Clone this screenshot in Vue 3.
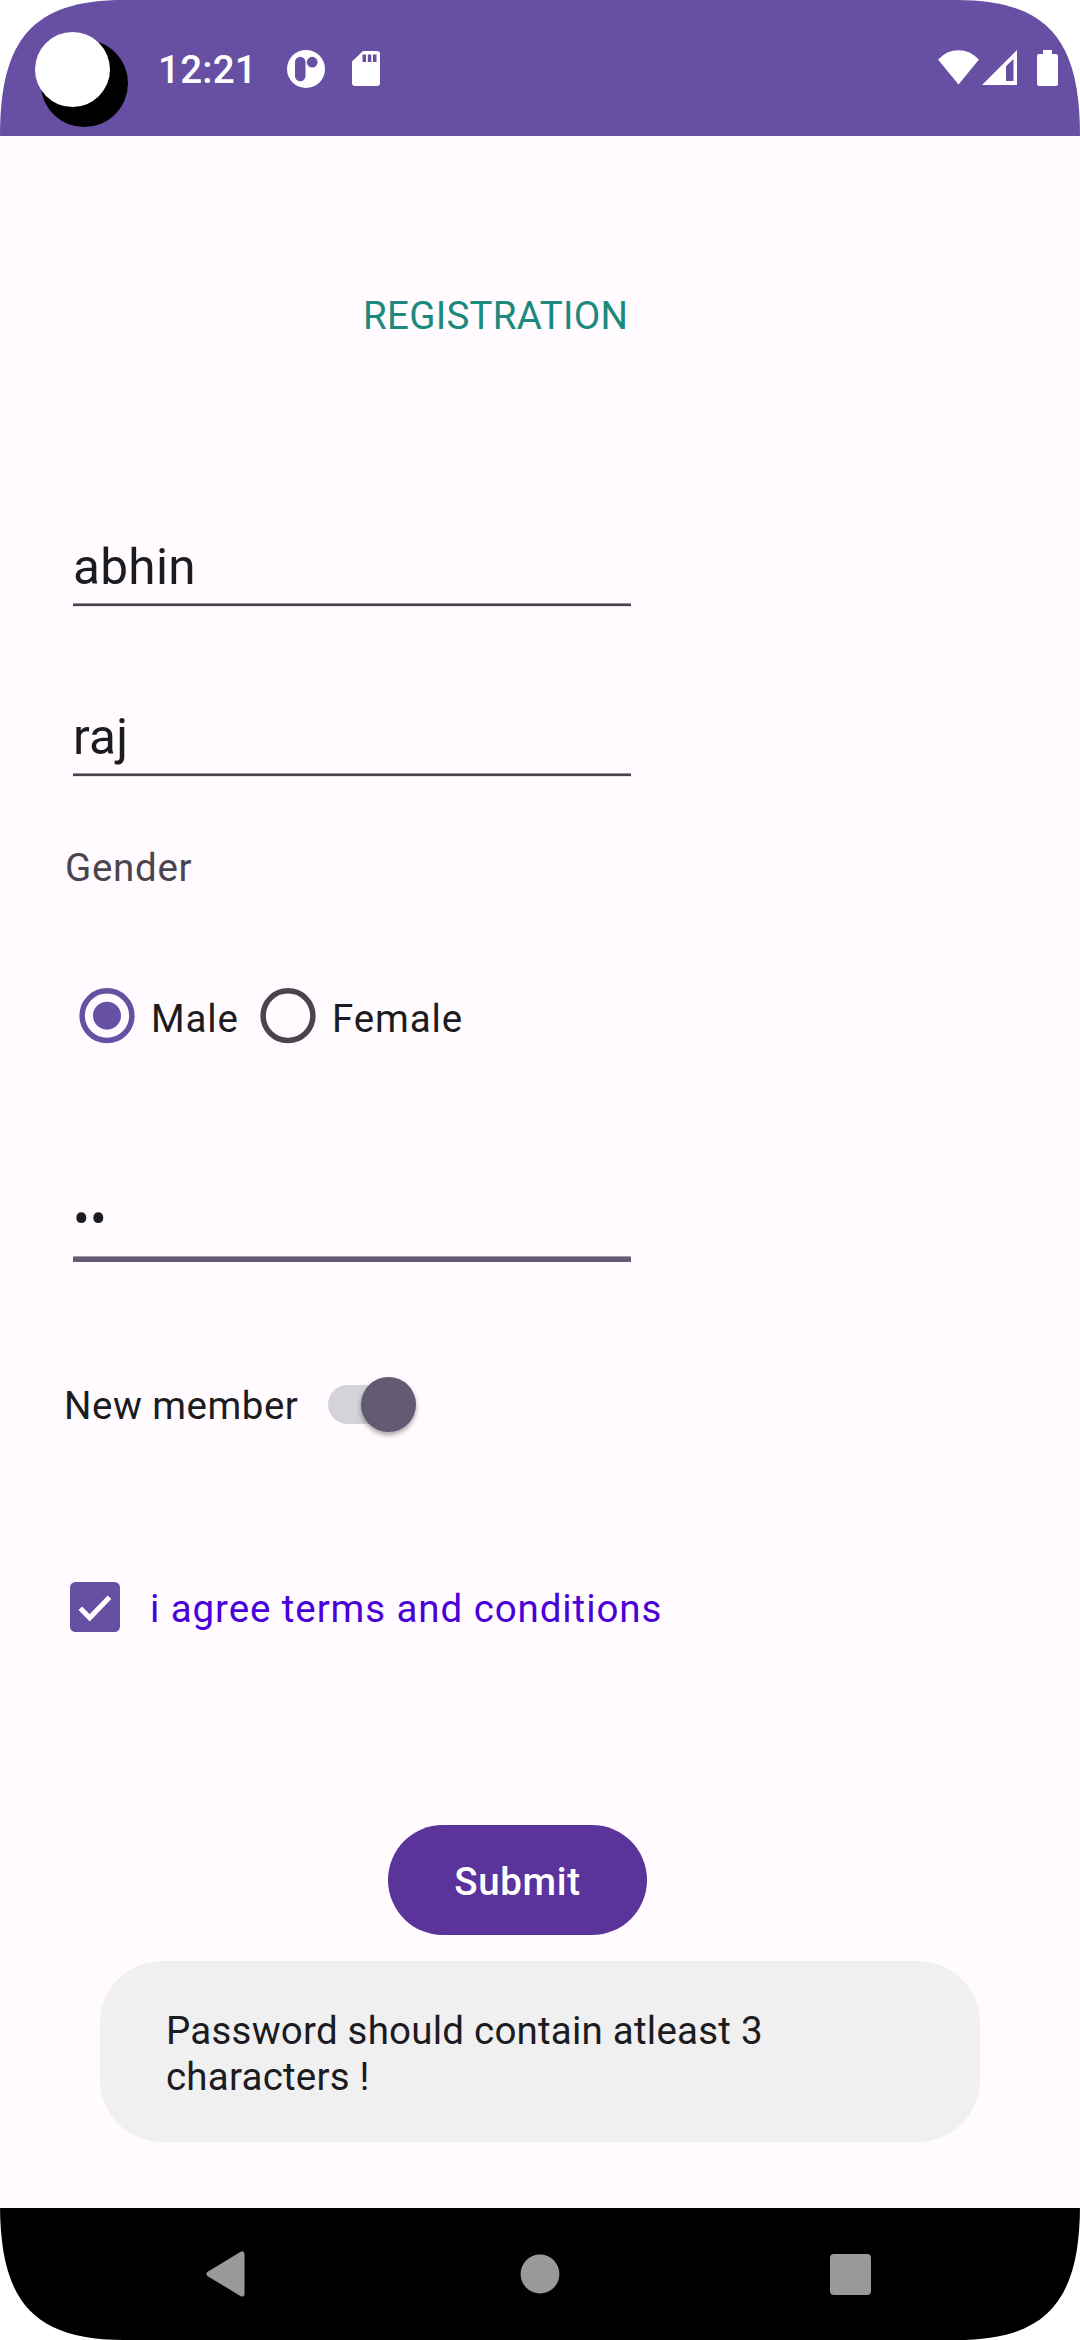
<script setup>
import { ref } from 'vue'

const firstName = ref('abhin')
const lastName = ref('raj')
const gender = ref('Male')
const options = ['Male', 'Female']
</script>

<template>
  <div class="screen">
    <header class="status">
      <svg class="camera" width="94" height="96" viewBox="35 32 94 96">
        <circle cx="84.3" cy="83.3" r="43.7" fill="#000" />
        <circle cx="72.5" cy="69.5" r="37.5" fill="#fff" />
      </svg>
      <span class="time">12:21</span>
      <svg class="app-icon" width="38" height="38" viewBox="0 0 38 38">
        <circle cx="19" cy="19" r="19" fill="#fff" />
        <rect x="8" y="6.7" width="10.5" height="24.5" rx="5.25" fill="#6750a4" />
        <circle cx="25.2" cy="12.2" r="5.4" fill="#6750a4" />
      </svg>
      <svg class="sd-icon" width="28" height="35" viewBox="0 0 28 35">
        <path d="M11 0H25Q28 0 28 3V32Q28 35 25 35H3Q0 35 0 32V10.5Z" fill="#fff" />
        <path d="M10.500 3.500h3.500v7.500h-3.500zM15.800 3.500h3.500v7.500h-3.500zM21 3.500h3.500v7.500h-3.500z" fill="#6750a4" />
      </svg>
      <div class="system">
        <svg width="41" height="35" viewBox="0 0 41 35">
          <path d="M0 9.500Q9 .3 20.500 .3T41 9.500L20.500 34.500Z" fill="#fff" />
        </svg>
        <svg class="cell" width="35" height="35" viewBox="0 0 35 35">
          <path fill-rule="evenodd" d="M35 0V35H0ZM31.500 9L24 16.200V31H31.500Z" fill="#fff" />
        </svg>
        <svg class="battery" width="21" height="36" viewBox="0 0 21 36">
          <path d="M6 0H15V4H19Q21 4 21 6V34Q21 36 19 36H2Q0 36 0 34V6Q0 4 2 4H6Z" fill="#fff" />
        </svg>
      </div>
    </header>

    <main class="form">
      <h1 class="title">REGISTRATION</h1>

      <div class="field first">
        <div class="value">{{ firstName }}</div>
        <div class="line"></div>
      </div>
      <div class="field last">
        <div class="value">{{ lastName }}</div>
        <div class="line"></div>
      </div>

      <div class="label">Gender</div>
      <div class="radios">
        <div v-for="option in options" :key="option" class="radio">
          <svg width="56" height="56" viewBox="0 0 56 56" :class="{ on: gender === option }">
            <circle cx="28" cy="27.700" r="24.900" fill="none" stroke="currentColor" stroke-width="5.500" />
            <circle v-if="gender === option" cx="28" cy="27.700" r="14" fill="currentColor" />
          </svg>
          <span>{{ option }}</span>
        </div>
      </div>

      <div class="field password">
        <div class="value">••</div>
        <div class="line focused"></div>
      </div>

      <div class="member">
        <span>New member</span>
        <div class="switch"><div class="thumb"></div></div>
      </div>

      <div class="terms">
        <svg width="50" height="50" viewBox="0 0 50 50">
          <rect width="50" height="50" rx="5.500" fill="#6750a4" />
          <path d="M10.300 26.200L19.700 35.800L39.500 15.200" fill="none" stroke="#fff" stroke-width="5" />
        </svg>
        <span>i agree terms and conditions</span>
      </div>

      <button class="submit">Submit</button>
      <div class="toast">Password should contain atleast 3 characters !</div>
    </main>

    <nav class="navbar">
      <svg width="40" height="46" viewBox="0 0 40 46">
        <path d="M3 23L36 3V43Z" fill="#999" stroke="#999" stroke-width="5" stroke-linejoin="round" />
      </svg>
      <svg class="home" width="40" height="40" viewBox="0 0 40 40">
        <circle cx="20" cy="20" r="19.400" fill="#999" />
      </svg>
      <svg class="recent" width="41" height="41" viewBox="0 0 41 41">
        <rect width="41" height="41" rx="4" fill="#999" />
      </svg>
    </nav>
  </div>
</template>

<style>
body {
  margin: 0;
  background: #fff;
}
</style>

<style scoped>
.screen {
  width: 1080px;
  height: 2340px;
  display: flex;
  flex-direction: column;
  overflow: hidden;
  background: #fffbfe;
  color: #1c1b1f;
  font-family: Roboto, sans-serif;
  font-size: 38.5px;
  line-height: 46px;
  clip-path: path('M0 136C0 40 32 0 124 0H956C1048 0 1080 40 1080 136V2204C1080 2300 1048 2340 956 2340H124C32 2340 0 2300 0 2204Z');
}
svg {
  display: block;
  flex: none;
}
.status {
  height: 136px;
  flex: none;
  display: flex;
  align-items: flex-start;
  background: #6750a4;
}
.camera { margin: 32px 0 0 35px; }
.time {
  width: 92px;
  margin: 47px 0 0 29px;
  color: #fff;
  font-weight: 500;
  letter-spacing: 0.25px;
  white-space: nowrap;
}
.app-icon { margin: 49.500px 0 0 36.500px; }
.sd-icon { margin: 51px 0 0 27.500px; }
.system {
  display: flex;
  margin: 50px 22px 0 auto;
}
.cell { margin-left: 3px; }
.battery { margin-left: 20px; }

.form {
  position: relative;
  flex: 1;
  display: flex;
  flex-direction: column;
  align-items: flex-start;
}
.title {
  margin: 157px 0 0 363px;
  font-size: 38.5px;
  font-weight: 400;
  letter-spacing: 0.28px;
  color: #1b897b;
}
.field {
  width: 558px;
  margin-left: 73px;
}
.first { margin-top: 199px; }
.last { margin-top: 101px; }
.password { margin-top: 146px; }
.value {
  height: 58px;
  line-height: 58px;
  font-size: 49.5px;
  letter-spacing: 0.3px;
}
.line {
  height: 4px;
  margin-top: 7px;
  background: linear-gradient(#949198 1px, #49454f 1px 3px, #e6e2e7 3px);
}
.line.focused {
  height: 6px;
  margin-top: 8px;
  background: linear-gradient(#a09ba9 1px, #625b71 1px);
}
.label {
  margin: 68px 0 0 65px;
  color: #49454f;
  letter-spacing: 0.7px;
}
.radios {
  display: flex;
  margin: 97px 0 0 79px;
}
.radio {
  display: flex;
  width: 181px;
  color: #1c1b1f;
}
.radio svg { color: #49454f; }
.radio svg.on { color: #6750a4; }
.radio span {
  margin: 8px 0 0 16px;
  letter-spacing: 0.9px;
}
.member {
  display: flex;
  align-items: center;
  height: 60px;
  margin: 112px 0 0 64px;
}
.member span {
  width: 264px;
  padding-top: 4px;
  letter-spacing: 0.5px;
}
.switch {
  display: flex;
  align-items: center;
  justify-content: flex-end;
  width: 88px;
  height: 39px;
  border-radius: 20px;
  background: #d5d3da;
}
.thumb {
  flex: none;
  width: 55px;
  height: 55px;
  border-radius: 50%;
  background: #625b71;
  box-shadow: 0 3px 5px rgba(0, 0, 0, 0.35);
}
.terms {
  display: flex;
  margin: 148px 0 0 70px;
  color: #4a00d8;
}
.terms span {
  margin: 4px 0 0 30px;
  letter-spacing: 0.91px;
}
.submit {
  width: 259px;
  height: 110px;
  margin: 193px 0 0 388px;
  padding: 4px 0 0;
  border: 0;
  border-radius: 55px;
  background: #5a349b;
  color: #fff;
  font: 500 38.5px/46px Roboto, sans-serif;
  letter-spacing: 0.65px;
}
.toast {
  position: absolute;
  left: 100px;
  top: 1825px;
  box-sizing: border-box;
  width: 880px;
  height: 181px;
  padding: 47px 66px;
  border-radius: 62px;
  background: #f0f0f0;
  letter-spacing: 0.22px;
}
.navbar {
  height: 132px;
  flex: none;
  display: flex;
  align-items: center;
  padding-left: 206px;
  background: #000;
}
.home { margin-left: 274px; }
.recent { margin-left: 270px; }
</style>
